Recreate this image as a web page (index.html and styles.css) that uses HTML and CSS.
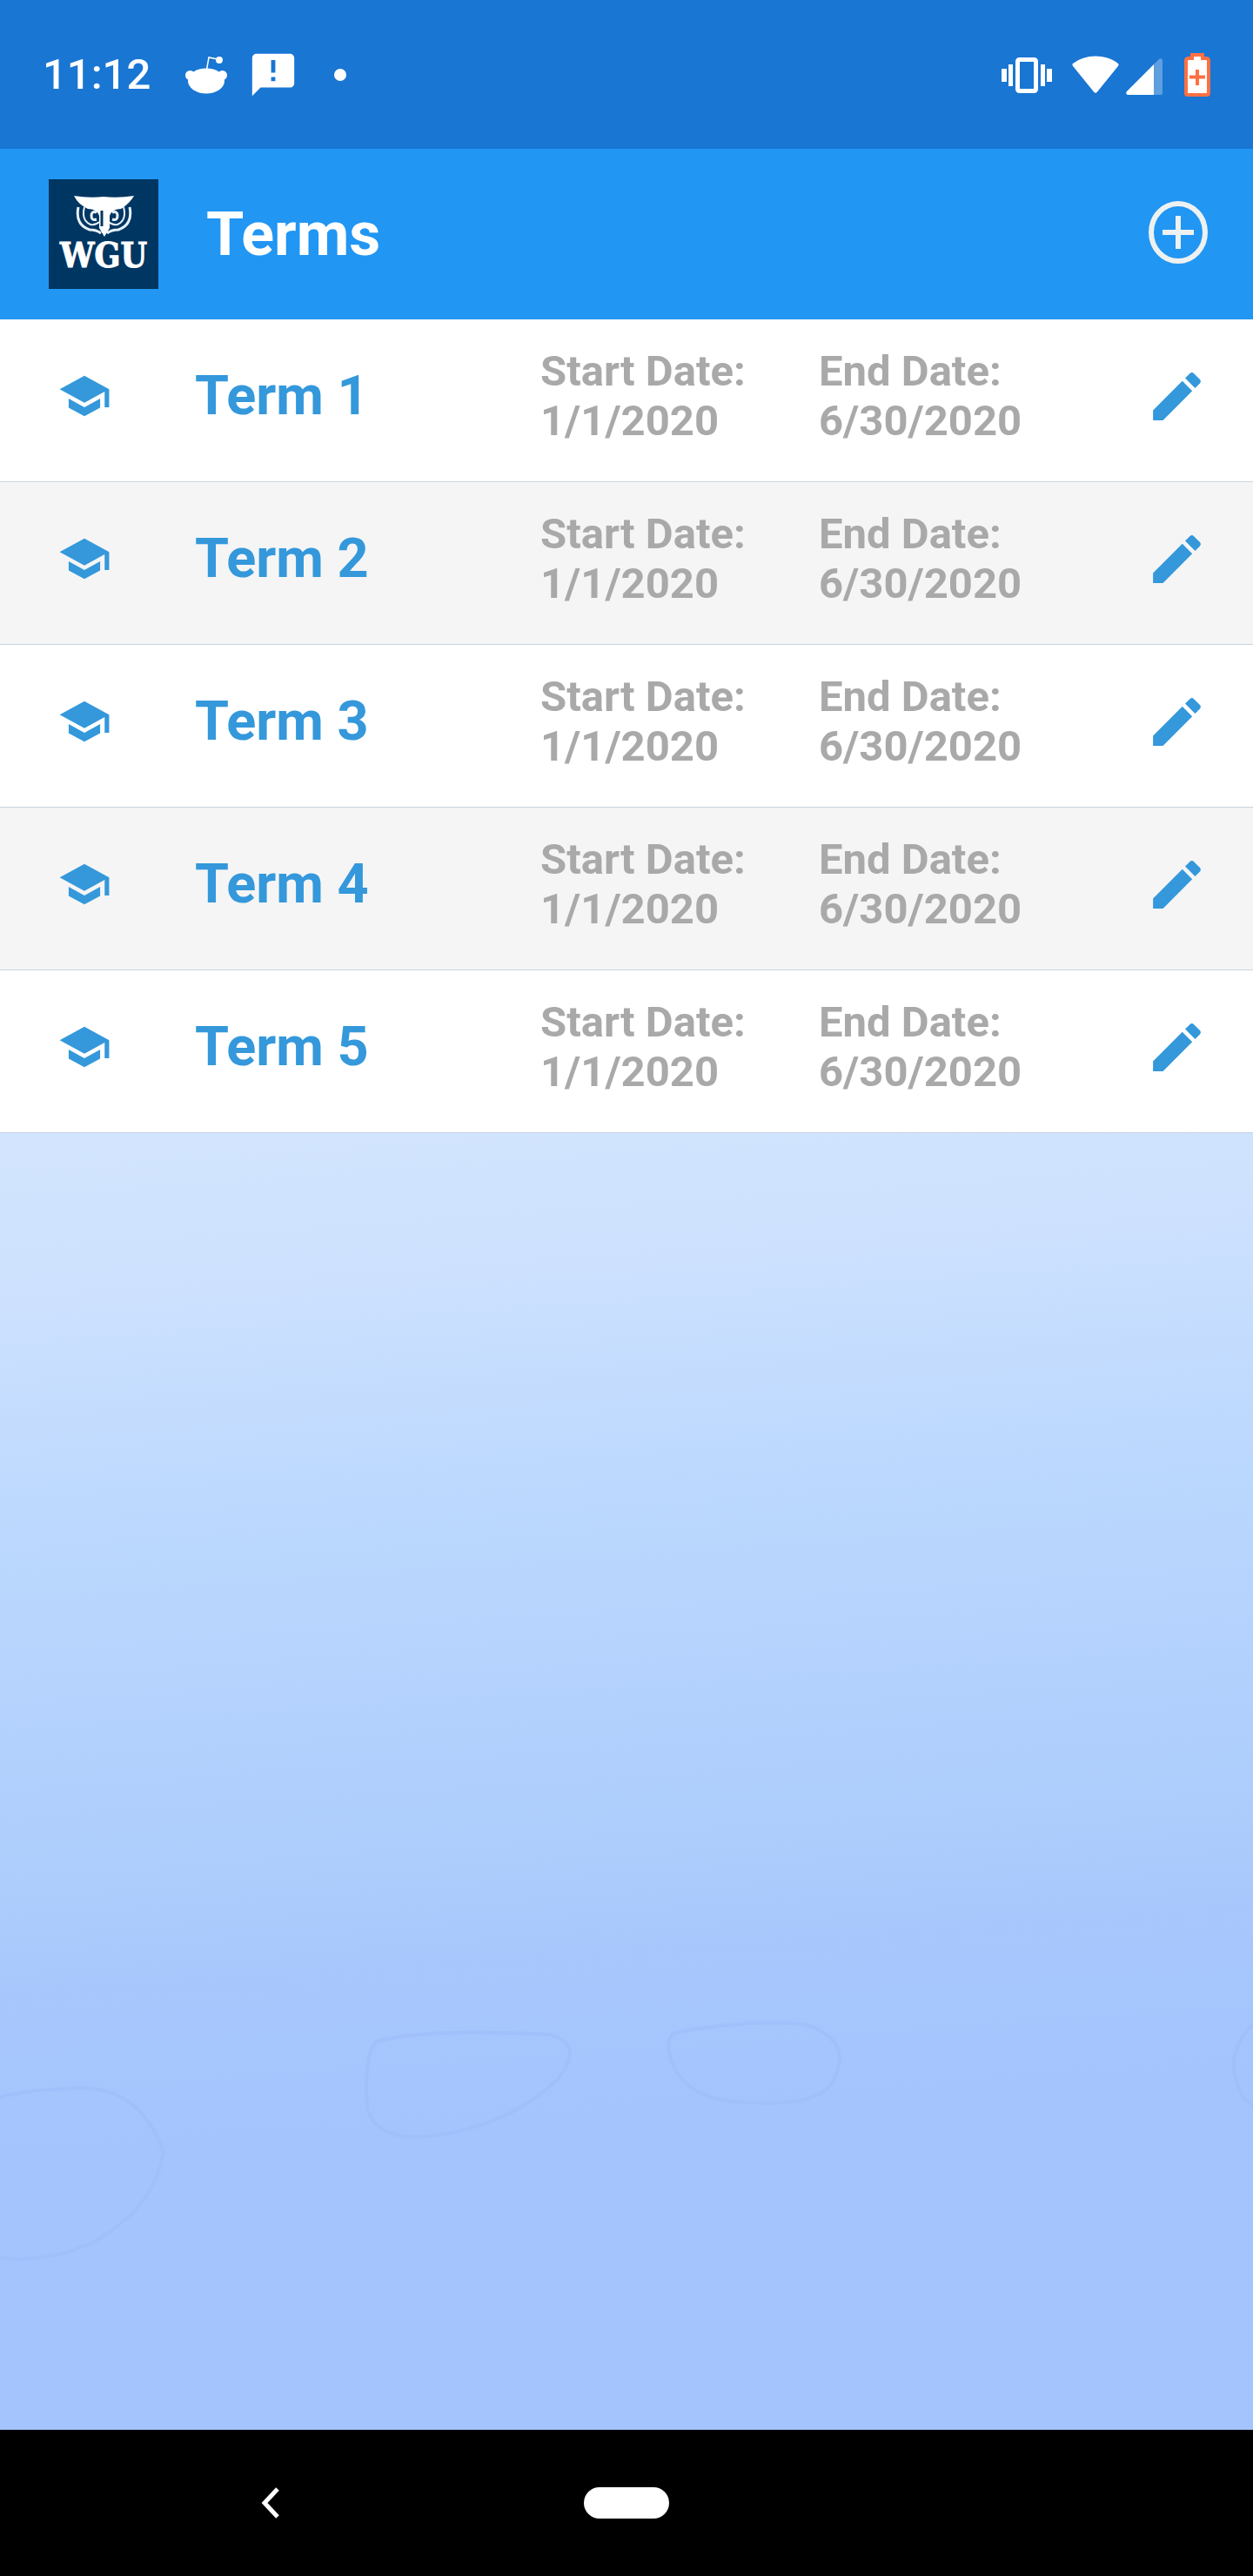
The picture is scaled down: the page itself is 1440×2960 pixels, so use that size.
FILE: index.html
```html
<!DOCTYPE html>
<html lang="en">
<head>
<meta charset="utf-8">
<meta name="viewport" content="width=device-width, initial-scale=1">
<title>Terms</title>
<link rel="stylesheet" href="styles.css">
</head>
<body>
<svg class="symbols" aria-hidden="true">
  <symbol id="school" viewBox="0 0 24 24"><path d="M5 13.18v4L12 21l7-3.82v-4L12 17l-7-3.82zM12 3L1 9l11 6 9-4.91V17h2V9L12 3z"/></symbol>
  <symbol id="edit" viewBox="0 0 24 24"><path d="M3 17.25V21h3.75L17.81 9.94l-3.75-3.75L3 17.25zM20.71 7.04c.39-.39.39-1.02 0-1.41l-2.34-2.34c-.39-.39-1.02-.39-1.41 0l-1.83 1.83 3.75 3.75 1.83-1.83z"/></symbol>
</svg>

<div class="status-bar">
  <time class="clock">11:12</time>
  <div class="notifications">
    <svg width="48" height="60" viewBox="0 0 48 60" fill="#fff" aria-hidden="true">
      <ellipse cx="24" cy="37" rx="21" ry="14.500"/>
      <circle cx="5.500" cy="30.500" r="5.500"/><circle cx="42.500" cy="30.500" r="5.500"/>
      <path d="M24.500 24L27 10l10 2" fill="none" stroke="#fff" stroke-width="1.500"/>
      <circle cx="39" cy="13" r="4"/>
    </svg>
    <svg width="58" height="58" viewBox="0 0 24 24" fill="#fff" aria-hidden="true"><path d="M20 2H4c-1.100 0-1.990.9-1.990 2L2 22l4-4h14c1.100 0 2-.9 2-2V4c0-1.100-.9-2-2-2zm-7 13h-2v-2h2v2zm0-4h-2V5h2v6z"/></svg>
    <span class="dot"></span>
  </div>
  <div class="system-icons">
    <svg width="58" height="60" viewBox="0 0 58 60" fill="#fff" aria-hidden="true">
      <rect x="0" y="23" width="6" height="15"/><rect x="8" y="18" width="5" height="25"/>
      <rect x="45" y="18" width="5" height="25"/><rect x="52" y="23" width="6" height="15"/>
      <rect x="18.500" y="12.500" width="21" height="36" rx="2" fill="none" stroke="#fff" stroke-width="5"/>
    </svg>
    <svg class="wifi" width="54" height="60" viewBox="0 0 54 60" fill="#fff" aria-hidden="true"><path d="M1 17Q12 8.500 27 8.500T53 17q1 1 .3 2.500L29 49.500q-2 2.500-4 0L.7 19.500Q0 18 1 17z"/></svg>
    <svg class="signal" width="42" height="60" viewBox="0 0 42 60" fill="#fff" aria-hidden="true">
      <path d="M32 18v35H2q-3-1-1-4z"/><path d="M32 18l6-6q3-2 4 1v38q0 2-2 2h-8z" opacity=".3"/>
    </svg>
    <svg width="30" height="60" viewBox="0 0 30 60" aria-hidden="true">
      <path d="M9 7h12v4h4q3 0 3 3v37q0 2-2 2H4q-2 0-2-2V14q0-3 3-3h4z" fill="#fff" stroke="#ff7043" stroke-width="4"/>
      <path d="M15 24v18M6 32.500h18" stroke="#ff7043" stroke-width="4"/>
    </svg>
  </div>
</div>

<header class="app-bar">
  <svg class="logo" viewBox="0 0 126 126" role="img" aria-label="WGU">
    <rect width="126" height="126" fill="#003662"/>
    <g fill="none" stroke="#e8f2fa" stroke-width="3">
      <path d="M34 32q-4 20 13 26 8 0 13 4M93 32q4 20-13 26-8 0-13 4"/>
      <path d="M41 32q-4 15 7 20 6 1 10-3M86 32q4 15-7 20-6 1-10-3" stroke-width="2"/>
      <path d="M55 38q-6-2-6 4t6 4M73 38q6-2 6 4t-6 4"/>
    </g>
    <path d="M29 19q18 3 34 1 16 2 35-1-5 9-15 15-10 0-13 8v14l-6 10-6-10V42q-3-8-13-8-11-5-16-15z" fill="#fff"/>
    <path d="M61 36v18" stroke="#003662" stroke-width="3"/>
    <text class="logo-text" x="63" y="101" text-anchor="middle">WGU</text>
  </svg>
  <h1 class="title">Terms</h1>
  <button class="icon-button" type="button" aria-label="Add term">
    <svg width="70" height="74" viewBox="0 0 70 74" fill="none" stroke="#eef1f2" stroke-width="6" aria-hidden="true">
      <ellipse cx="35" cy="37" rx="31" ry="33"/><path d="M35 18v38M17 37h36"/>
    </svg>
  </button>
</header>

<main class="content">
  <ul class="terms">
    <li class="term"><svg class="term-icon" aria-hidden="true"><use href="#school"/></svg><h2 class="term-name">Term 1</h2><p class="date">Start Date:<br>1/1/2020</p><p class="date">End Date:<br>6/30/2020</p><button class="edit" type="button" aria-label="Edit Term 1"><svg aria-hidden="true"><use href="#edit"/></svg></button></li>
    <li class="term"><svg class="term-icon" aria-hidden="true"><use href="#school"/></svg><h2 class="term-name">Term 2</h2><p class="date">Start Date:<br>1/1/2020</p><p class="date">End Date:<br>6/30/2020</p><button class="edit" type="button" aria-label="Edit Term 2"><svg aria-hidden="true"><use href="#edit"/></svg></button></li>
    <li class="term"><svg class="term-icon" aria-hidden="true"><use href="#school"/></svg><h2 class="term-name">Term 3</h2><p class="date">Start Date:<br>1/1/2020</p><p class="date">End Date:<br>6/30/2020</p><button class="edit" type="button" aria-label="Edit Term 3"><svg aria-hidden="true"><use href="#edit"/></svg></button></li>
    <li class="term"><svg class="term-icon" aria-hidden="true"><use href="#school"/></svg><h2 class="term-name">Term 4</h2><p class="date">Start Date:<br>1/1/2020</p><p class="date">End Date:<br>6/30/2020</p><button class="edit" type="button" aria-label="Edit Term 4"><svg aria-hidden="true"><use href="#edit"/></svg></button></li>
    <li class="term"><svg class="term-icon" aria-hidden="true"><use href="#school"/></svg><h2 class="term-name">Term 5</h2><p class="date">Start Date:<br>1/1/2020</p><p class="date">End Date:<br>6/30/2020</p><button class="edit" type="button" aria-label="Edit Term 5"><svg aria-hidden="true"><use href="#edit"/></svg></button></li>
  </ul>
  <div class="backdrop">
    <svg class="ripples" viewBox="0 0 1440 1490" preserveAspectRatio="none" fill="none" stroke="#a1c0fb" stroke-width="4" aria-hidden="true">
      <path d="M-4 1110Q20 1100 80 1098q80-8 108 74-10 50-48 80-60 50-144 40z"/>
      <path d="M432 1044q60-16 200-8 40 10 10 50-50 50-130 64-80 14-90-30-4-60 10-76z"/>
      <path d="M775 1034q80-16 150-10 60 20 30 70-20 24-90 20-70 0-90-40-14-30 0-40z"/>
      <path d="M1444 1020q-44 40-14 90l14 10z"/>
    </svg>
  </div>
</main>

<nav class="nav-bar" aria-label="System">
  <button class="nav-button" type="button" aria-label="Back"><svg width="22" height="36" viewBox="0 0 22 36" fill="none" stroke="#fff" stroke-width="5" aria-hidden="true"><path d="M19 2L4 18l15 16"/></svg></button>
  <button class="nav-button" type="button" aria-label="Home"><span class="pill"></span></button>
</nav>
</body>
</html>
```
FILE: styles.css
```css
* { box-sizing: border-box; }

body {
  margin: 0;
  min-height: 100vh;
  display: flex;
  flex-direction: column;
  font-family: Roboto, sans-serif;
  background: #a4c4fe;
}

h1, h2, p, ul { margin: 0; padding: 0; }

button {
  padding: 0;
  border: 0;
  background: none;
  cursor: pointer;
}

svg { display: block; flex: none; }

.symbols { position: absolute; width: 0; height: 0; }

.status-bar {
  display: flex;
  align-items: center;
  height: 171px;
  padding: 0 49px;
  background: #1976d3;
  color: #fff;
}

.clock {
  font-size: 49px;
  line-height: 57px;
  font-weight: 500;
}

.notifications {
  display: flex;
  align-items: center;
  gap: 24px;
  margin-left: 40px;
}

.dot {
  width: 14px;
  height: 14px;
  margin-left: 17px;
  border-radius: 50%;
  background: #fff;
}

.system-icons {
  display: flex;
  align-items: center;
  margin-left: auto;
}

.wifi { margin: 0 8px 0 23px; }
.signal { margin-right: 25px; }

.app-bar {
  display: flex;
  align-items: center;
  height: 196px;
  padding: 0 51px 0 56px;
  background: #2196f3;
  color: #fff;
}

.logo { width: 126px; height: 126px; }

.logo-text {
  font-family: "DejaVu Serif Condensed", "DejaVu Serif", serif;
  font-size: 39px;
  font-weight: 700;
  fill: #fff;
  stroke: #fff;
  stroke-width: 1px;
}

.title {
  margin-left: 55px;
  font-size: 70px;
  line-height: 82px;
  font-weight: 700;
}

.icon-button {
  margin-left: auto;
  padding-bottom: 4px;
}

.content {
  flex: 1;
  display: flex;
  flex-direction: column;
}

.terms { list-style: none; }

.term {
  display: grid;
  grid-template-columns: 224px 397fr 320fr 323fr 176px;
  align-items: center;
  padding: 31px 0 41px;
  border-bottom: 1px solid #c8d3e0;
  background: #fff;
}

.term:nth-child(even) { background: #f5f5f5; }

.term-icon {
  width: 62px;
  height: 62px;
  margin-left: 66px;
  fill: #3498db;
}

.term-name {
  font-size: 63px;
  line-height: 74px;
  font-weight: 700;
  color: #3498db;
}

.date {
  font-size: 49px;
  line-height: 57px;
  font-weight: 700;
  color: #a9a9a9;
}

.edit {
  display: flex;
  justify-content: center;
  fill: #3498db;
}

.edit svg { width: 73px; height: 73px; }

.backdrop {
  flex: 1;
  display: flex;
  background: linear-gradient(176deg, #d3e5fe 0%, #cde1fe 12%, #bdd9fe 27%, #b4d2fd 42%, #adcdfc 54%, #a6c6fd 65%, #a4c4fe 74%, #a4c4fe 100%);
}

.ripples { width: 100%; flex: 1; }

.nav-bar {
  display: grid;
  grid-template-columns: 1fr 1fr 1fr;
  align-items: center;
  height: 168px;
  padding: 0 106px;
  background: #000;
}

.nav-button {
  display: flex;
  justify-content: center;
}

.pill {
  width: 98px;
  height: 36px;
  border-radius: 18px;
  background: #fff;
}
```
